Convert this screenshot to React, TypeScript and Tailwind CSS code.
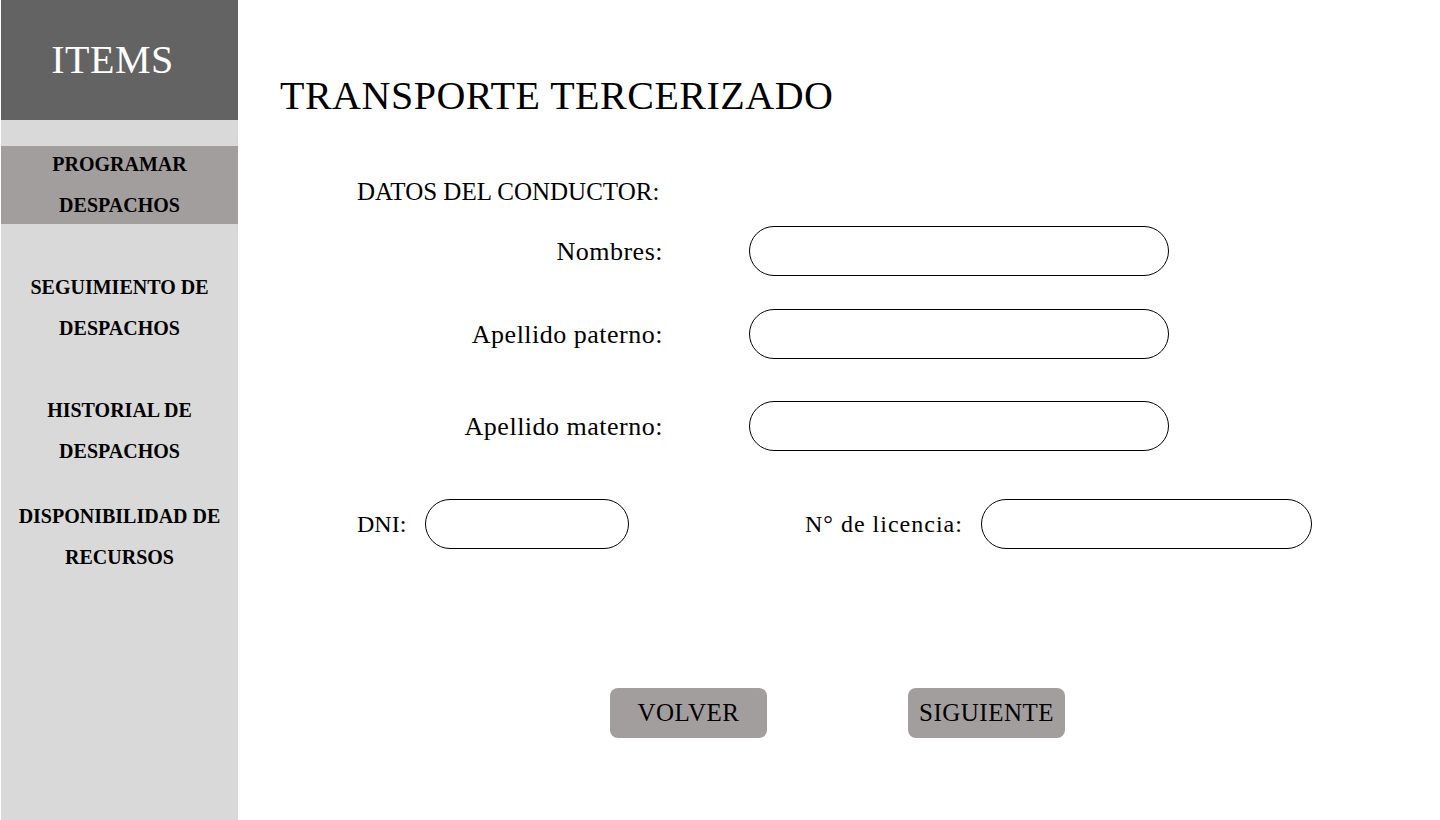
const serif = { fontFamily: '"Liberation Serif", "DejaVu Serif", serif' };

function NavItem({ lines, active = false, className = '' }: { lines: string[]; active?: boolean; className?: string }) {
  return (
    <div
      className={`flex flex-col items-center justify-center text-[20px] font-bold leading-[41px] text-black ${
        active ? 'h-[78px] bg-[#a39e9e]' : ''
      } ${className}`}
    >
      {lines.map((l) => (
        <span key={l}>{l}</span>
      ))}
    </div>
  );
}

function Field({ w }: { w: string }) {
  return <input className={`h-[50px] ${w} rounded-full border border-black bg-white px-5 outline-none`} />;
}

export default function App() {
  return (
    <div className="flex h-[820px] w-full bg-white pl-px" style={serif}>
      {/* Sidebar */}
      <aside className="flex w-[237px] flex-col bg-[#d9d9d9]">
        <div className="flex h-[120px] items-center justify-center bg-[#636363] pr-[14px] text-[40px] tracking-[0.5px] text-white">
          ITEMS
        </div>
        <NavItem lines={['PROGRAMAR', 'DESPACHOS']} active className="mt-[26px]" />
        <NavItem lines={['SEGUIMIENTO DE', 'DESPACHOS']} className="mt-[43px]" />
        <NavItem lines={['HISTORIAL DE', 'DESPACHOS']} className="mt-[41px]" />
        <NavItem lines={['DISPONIBILIDAD DE', 'RECURSOS']} className="mt-[24px]" />
      </aside>

      {/* Content */}
      <main className="flex-1 pl-[42px] pt-[76px] text-black">
        <h1 className="h-[40px] text-[40px] leading-[40px] tracking-[0.5px]">TRANSPORTE TERCERIZADO</h1>

        <div className="ml-[77px]">
          <p className="mt-[61px] h-[30px] text-[25px] leading-[30px]">DATOS DEL CONDUCTOR:</p>

          <div className="mt-[19px] flex items-center">
            <label className="w-[306px] text-right text-[26px] tracking-[0.5px]">Nombres:</label>
            <div className="ml-[86px]"><Field w="w-[420px]" /></div>
          </div>
          <div className="mt-[33px] flex items-center">
            <label className="w-[306px] text-right text-[26px] tracking-[0.5px]">Apellido paterno:</label>
            <div className="ml-[86px]"><Field w="w-[420px]" /></div>
          </div>
          <div className="mt-[42px] flex items-center">
            <label className="w-[306px] text-right text-[26px] tracking-[0.5px]">Apellido materno:</label>
            <div className="ml-[86px]"><Field w="w-[420px]" /></div>
          </div>

          <div className="mt-[48px] flex items-center">
            <label className="w-[68px] text-[24px]">DNI:</label>
            <Field w="w-[204px]" />
            <label className="ml-[176px] w-[176px] text-[24px] tracking-[1px]">N° de licencia:</label>
            <Field w="w-[331px]" />
          </div>

          <div className="ml-[253px] mt-[139px] flex gap-[141px]">
            <button className="h-[50px] w-[157px] rounded-lg bg-[#a39e9e] text-[25px] tracking-[0.5px]">VOLVER</button>
            <button className="h-[50px] w-[157px] rounded-lg bg-[#a39e9e] text-[25px] tracking-[0.5px]">SIGUIENTE</button>
          </div>
        </div>
      </main>
    </div>
  );
}
